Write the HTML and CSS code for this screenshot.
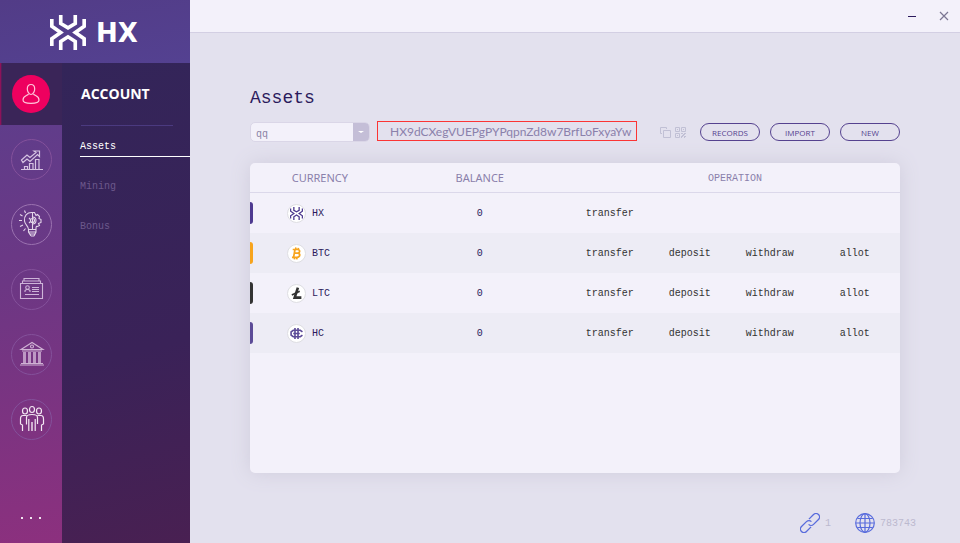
FILE: index.html
```html
<!DOCTYPE html>
<html lang="en">
<head>
<meta charset="utf-8">
<title>HX Wallet</title>
<link rel="stylesheet" href="styles.css">
</head>
<body>
<svg class="defs" aria-hidden="true">
  <symbol id="hx-mark" viewBox="0 0 108 106">
    <g fill="none" stroke="currentColor" stroke-width="11" stroke-linejoin="miter">
      <path d="M32 0V26L54 39L76 26V0"/>
      <path d="M32 106V80L54 66L76 80V106"/>
      <path d="M5 12V34L32 53L5 72V94"/>
      <path d="M103 12V34L76 53L103 72V94"/>
    </g>
  </symbol>
</svg>
<div class="app">
  <aside class="sidebar">
    <div class="brand">
      <svg class="brand-mark"><use href="#hx-mark"/></svg>
      <span class="brand-name">HX</span>
    </div>
    <div class="menus">
      <nav class="rail" aria-label="Sections">
        <button class="rail-item active" type="button" aria-label="Account">
          <span class="disc"><svg width="38" height="38" viewBox="0 0 38 38" fill="none" stroke="#ffc4da" stroke-width="1.200"><path d="M19 9.500C16.500 9.500 15.300 11.500 15.300 14C15.300 16.500 17 19.500 19 19.500S22.700 16.500 22.700 14C22.700 11.500 21.500 9.500 19 9.500ZM16.500 19C15.500 21 11 20.500 11 25C11 27.500 15 28.300 19 28.300S27 27.500 27 25C27 20.500 22.500 21 21.500 19"/></svg></span>
        </button>
        <button class="rail-item" type="button" aria-label="Trading">
          <span class="disc"><svg width="41" height="41" viewBox="0 0 41 41" fill="none" stroke="#d6c3e2" stroke-width="1.200"><path d="M10 30.500H32M13.500 30V27.500H16.500V30M18.500 30V24.500H22V30M24.500 30V20.500H28V30M10.500 21L16 16L19 18.500L25 13.500L23 12H28.500V17.500L26.500 15.500L19 22.500L16 20L12 23.500Z"/></svg></span>
        </button>
        <button class="rail-item bright" type="button" aria-label="Ideas">
          <span class="disc"><svg width="41" height="41" viewBox="0 0 41 41" fill="none" stroke="#e4d6ea" stroke-width="1.100"><path d="M21.500 8.500C16 8 13 12 13.500 17C14 21 17.500 22 17.500 25.500H25C25 23 25 22 26.500 22.500L28.500 21.500L27.500 19.500L30 18.500V15.500L28 14.500L28.500 12.500L26.500 10.500L25 11.500L23.500 8.500ZM21.500 8.500V13M21.500 20V25.500M18 28H25M18.500 30H24.500M20 32H23M17.500 25.500V28L20 32M25 25.500V28L23 32M8 16.500H11M9 22.500L12 21M12.500 27L14.500 24.500M9 10.500L11.500 12M13.500 6.500L14.500 9M18 14L19.500 15.500M18 19L19.500 17.500"/><path d="M21.500 13A3.500 3.500 0 0 1 21.500 20Z"/><circle cx="21.500" cy="16.500" r="2"/></svg></span>
        </button>
        <button class="rail-item" type="button" aria-label="Contacts">
          <span class="disc"><svg width="41" height="41" viewBox="0 0 41 41" fill="none" stroke="#cdb3d8" stroke-width="1.100"><path d="M9.500 14.500H31.500V29.500H9.500ZM11.500 14V12H29.500V14M13 11.500V9.500H28V11.500M14 23V21.500L15.500 20.500H17.500L19 21.500V23M21 18.500H28M21 20.500H28M21 22.500H28M14 25.500H28"/><circle cx="16.500" cy="18.500" r="1.800"/></svg></span>
        </button>
        <button class="rail-item" type="button" aria-label="Bank">
          <span class="disc"><svg width="41" height="41" viewBox="0 0 41 41" fill="none" stroke="#cfb2d4" stroke-width="1.100"><path d="M10 15.500L21 8.500L32 15.500ZM11 17H31M10 29.500H32M9 31H33"/><circle cx="21" cy="12.500" r="1.500"/><path d="M13.500 18V29M18.500 18V29M23.500 18V29M28.500 18V29" stroke-width="3" opacity=".8"/></svg></span>
        </button>
        <button class="rail-item" type="button" aria-label="Community">
          <span class="disc"><svg width="41" height="41" viewBox="0 0 41 41" fill="none" stroke="#f3e7f2" stroke-width="1.200"><ellipse cx="21" cy="10.500" rx="2.500" ry="3"/><ellipse cx="14" cy="12" rx="2.500" ry="3"/><ellipse cx="28" cy="12" rx="2.500" ry="3"/><path d="M16 25H15.500V18.500C15.500 16 17.500 15.500 21 15.500S26.500 16 26.500 18.500V25M15.500 16.500H12C10 16.500 9.500 18 9.500 20V25L11.500 26V32M26.500 16.500H30C32 16.500 32.500 18 32.500 20V25L30.500 26V32M17.800 20V32M24.200 20V32"/><path d="M21 23V32" stroke-width="2" opacity=".7"/></svg></span>
        </button>
        <button class="more" type="button" aria-label="More"><i></i><i></i><i></i></button>
      </nav>
      <nav class="submenu" aria-label="Account">
        <h2>ACCOUNT</h2>
        <a class="current" href="#assets">Assets</a>
        <a href="#mining">Mining</a>
        <a href="#bonus">Bonus</a>
      </nav>
    </div>
  </aside>
  <div class="workspace">
    <header class="titlebar">
      <button type="button" aria-label="Minimize"><svg width="8" height="10" viewBox="0 0 8 10"><path d="M0 5.500H8" stroke="#2b1a5c"/></svg></button>
      <button type="button" aria-label="Close"><svg width="10" height="10" viewBox="0 0 10 10"><path d="M1 1L9 9M9 1L1 9" stroke="#7b7693" stroke-width="1.200"/></svg></button>
    </header>
    <main class="content">
      <h1>Assets</h1>
      <div class="toolbar">
        <div class="picker">
          <select aria-label="Account name"><option>qq</option></select>
          <span class="arrow"></span>
        </div>
        <output class="address">HX9dCXegVUEPgPYPqpnZd8w7BrfLoFxyaYw</output>
        <div class="actions">
          <button class="glyph" type="button" aria-label="Copy address"><svg width="11" height="11" viewBox="0 0 11 11" fill="none" stroke="#c1c0d5"><path d="M3.500 3.500H10.500V10.500H3.500ZM2 6.500H.5V.5H6.500V2"/></svg></button>
          <button class="glyph" type="button" aria-label="Show QR code"><svg width="11" height="11" viewBox="0 0 11 11" fill="none" stroke="#c1c0d5"><path d="M.5.5H4.500V4.500H.5ZM6.500.5H10.500V4.500H6.500ZM.5 6.500H4.500V10.500H.5ZM2 2.500H3M8 2.500H9M2 8.500H3M6 6.500H8M9 6.500H11M8 7.500H10M7 8.500H9M6 9.500H8M9 9.500H11M6 10.500H7M9 10.500H10"/></svg></button>
          <button class="pill" type="button">RECORDS</button>
          <button class="pill" type="button">IMPORT</button>
          <button class="pill" type="button">NEW</button>
        </div>
      </div>
      <section class="card">
        <table>
          <colgroup><col class="c-name"><col class="c-balance"><col class="c-op"><col class="c-op"><col class="c-op"><col class="c-last"></colgroup>
          <thead><tr><th>CURRENCY</th><th>BALANCE</th><th class="mono" colspan="4">OPERATION</th></tr></thead>
          <tbody>
            <tr class="hx"><td><div class="coin"><span class="badge"><svg width="13" height="13"><use href="#hx-mark"/></svg></span><span>HX</span></div></td><td class="amount">0</td><td><a href="#t">transfer</a></td><td></td><td></td><td></td></tr>
            <tr class="btc"><td><div class="coin"><span class="badge"><svg width="13" height="13" viewBox="0 0 12 12" fill="none" stroke="currentColor" stroke-width="1.600"><path d="M2.500 2.300H7C9.500 2.300 9.500 5.700 7 5.700H4M7 5.700C10 5.700 9.500 9.500 6.500 9.500H1.800M4.600 2.300L3.300 9.500M5.500.5L5.200 2M7.800.8L7.500 2.300M4.300 9.500L4 11.500M6.500 9.500L6.200 11.500"/></svg></span><span>BTC</span></div></td><td class="amount">0</td><td><a href="#t">transfer</a></td><td><a href="#d">deposit</a></td><td><a href="#w">withdraw</a></td><td><a href="#a">allot</a></td></tr>
            <tr class="ltc"><td><div class="coin"><span class="badge"><svg width="13" height="13" viewBox="0 0 12 12" fill="none" stroke="currentColor" stroke-width="2.400"><path d="M7.300 .5L4.300 9.800H10.500"/><path d="M1.700 7.300L9 4" stroke-width="1.500"/></svg></span><span>LTC</span></div></td><td class="amount">0</td><td><a href="#t">transfer</a></td><td><a href="#d">deposit</a></td><td><a href="#w">withdraw</a></td><td><a href="#a">allot</a></td></tr>
            <tr class="hc"><td><div class="coin"><span class="badge"><svg width="13" height="13" viewBox="0 0 12 12" fill="none" stroke="currentColor" stroke-width="1.500"><path d="M4.600 1V11M7.400 1V11M3 6H9M7.400 3H3L1 4.500V7.500L3 9H7.400M11.500 4.500L9.500 3H7.400M11.500 7.500L9.500 9H7.400"/></svg></span><span>HC</span></div></td><td class="amount">0</td><td><a href="#t">transfer</a></td><td><a href="#d">deposit</a></td><td><a href="#w">withdraw</a></td><td><a href="#a">allot</a></td></tr>
          </tbody>
        </table>
      </section>
    </main>
    <footer class="status">
      <span class="stat"><svg width="20" height="20" viewBox="0 0 20 20" fill="none" stroke="#586bdc" stroke-width="1.300"><g transform="rotate(-45 10 10)"><path d="M8 13.500H1.500A3.500 3.500 0 0 1 1.500 6.500H8.500A3.500 3.500 0 0 1 12 10"/><path d="M12 6.500H18.500A3.500 3.500 0 0 1 18.500 13.500H11.500A3.500 3.500 0 0 1 8 10"/></g></svg><span>1</span></span>
      <span class="stat"><svg width="20" height="20" viewBox="0 0 20 20" fill="none" stroke="#586bdc" stroke-width="1.200"><circle cx="10" cy="10" r="9.300"/><ellipse cx="10" cy="10" rx="5" ry="9.300"/><path d="M10 .7V19.300M1 10H19M2.500 5.500H17.500M2.500 14.500H17.500"/></svg><span>783743</span></span>
    </footer>
  </div>
</div>
</body>
</html>
```
FILE: styles.css
```css
* { box-sizing: border-box; }

body {
  margin: 0;
  background: #e3e1ee;
  color: #2b1a5c;
  font: 10px/20px "Liberation Mono", monospace;
}

button {
  padding: 0;
  border: 0;
  background: none;
  font: inherit;
  color: inherit;
}

a { color: inherit; text-decoration: none; }
svg { display: block; flex: none; }
.defs { position: absolute; width: 0; height: 0; }

.app { display: flex; min-height: 100vh; }

/* Sidebar */
.sidebar { display: flex; flex-direction: column; flex: none; width: 190px; }

.brand {
  display: flex;
  align-items: center;
  gap: 10px;
  height: 63px;
  padding: 2px 0 0 50px;
  background: linear-gradient(170deg, #523c87, #544191);
  color: #fff;
}
.brand-mark { width: 36px; height: 35px; }
.brand-name { font: bold 26px/30px "DejaVu Sans", sans-serif; }

.menus { display: flex; flex: 1; }

.rail {
  display: flex;
  flex-direction: column;
  gap: 3px;
  width: 62px;
  background: linear-gradient(170deg, #5b3f8d, #6c3784 45%, #8c307e);
}
.rail-item {
  display: flex;
  align-items: center;
  justify-content: center;
  height: 62px;
}
.disc {
  display: flex;
  align-items: center;
  justify-content: center;
  width: 41px;
  height: 41px;
  border: 1px solid #84519b;
  border-radius: 50%;
}
.bright .disc { border-color: #9b72b0; }
.active {
  background: linear-gradient(90deg, #a90c5a, #3a2558 2px);
}
.active .disc { width: 38px; height: 38px; border: 0; background: #ee005f; }
.more {
  display: flex;
  justify-content: center;
  gap: 7px;
  margin-top: auto;
  padding: 10px 0 24px;
}
.more i { width: 2px; height: 2px; background: #f3e7f2; }

.submenu {
  flex: 1;
  padding-left: 18px;
  background: linear-gradient(165deg, #332559, #3a2258 60%, #492052);
}
.submenu h2 {
  margin: 0 17px 10px 1px;
  border-bottom: 1px solid #4b3a80;
  color: #fff;
  font: bold 14px/62px "Open Sans", sans-serif;
}
.submenu a {
  display: block;
  height: 21px;
  margin-bottom: 19px;
  border-bottom: 1px solid transparent;
  color: #6c588b;
  line-height: 22px;
}
.submenu .current { border-color: #fff; color: #fff; }

/* Workspace */
.workspace { display: flex; flex: 1; flex-direction: column; min-width: 0; }

.titlebar {
  display: flex;
  align-items: center;
  justify-content: flex-end;
  gap: 23px;
  height: 33px;
  padding-right: 11px;
  border-bottom: 1px solid #d3cfe3;
  background: #f3f1fa;
}

.content { display: flex; flex: 1; flex-direction: column; padding: 50px 60px 0; }

h1 { margin: 0 0 8px; font-size: 18px; font-weight: normal; line-height: 30px; }

.toolbar { display: flex; align-items: center; height: 22px; margin-bottom: 20px; }

.picker { position: relative; width: 120px; margin-right: 7px; }
.picker select {
  display: block;
  width: 100%;
  height: 20px;
  padding: 2px 20px 0 5px;
  border: 1px solid #dad6e7;
  border-radius: 5px;
  background: #f3f1fa;
  color: #8a82a5;
  font: inherit;
  appearance: none;
}
.arrow {
  position: absolute;
  top: 1px;
  right: 1px;
  bottom: 1px;
  display: flex;
  align-items: center;
  justify-content: center;
  width: 16px;
  border-radius: 0 4px 4px 0;
  background: #c4bed7;
  pointer-events: none;
}
.arrow::after {
  border: 3px solid transparent;
  border-top: 2px solid #fff;
  border-bottom: 0;
  content: "";
}

.address {
  align-self: flex-start;
  width: 260px;
  height: 20px;
  padding-left: 12px;
  border: 1px solid #fb3535;
  color: #8a80ab;
  font: 12px/20px Lato, sans-serif;
}

.actions { display: flex; align-items: center; gap: 10px; margin-left: auto; }
.glyph + .glyph { margin: 0 4px 0 -6px; }
.pill {
  width: 60px;
  height: 18px;
  border: 1px solid #55428f;
  border-radius: 9px;
  color: #55428f;
  font: 8px/18px "Open Sans", sans-serif;
}

.card {
  flex: 1;
  overflow: hidden;
  border-radius: 5px;
  background: #f3f1fa;
  box-shadow: 0 0 20px #cfccdc;
}

table { width: 100%; border-collapse: collapse; table-layout: fixed; }
.c-name { width: 21.5%; }
.c-balance { width: 27.7%; }
.c-op { width: 12.3%; }
.c-last { width: 13.9%; }

th {
  height: 30px;
  padding: 0;
  box-shadow: inset 0 -1px #dbd8ea;
  color: #8a80ab;
  font: 11px/20px "Noto Sans", sans-serif;
}
th.mono { padding-top: 2px; font: 10px/20px "Liberation Mono", monospace; }
td { height: 40px; padding: 2px 0 0; color: #333; text-align: center; }
td:first-child { padding: 0; }
tbody tr:nth-child(even) { background: #edecf5; }
.amount { color: #2b1a5c; }

.coin { display: flex; align-items: center; color: #2b1a5c; line-height: 22px; }
.coin::before {
  width: 3px;
  height: 22px;
  margin-right: 34px;
  border-radius: 0 3px 3px 0;
  background: var(--coin);
  content: "";
}
.badge {
  display: flex;
  align-items: center;
  justify-content: center;
  width: 19px;
  height: 19px;
  margin-right: 6px;
  border: 1px solid #dedee2;
  border-radius: 50%;
  background: #fff;
  color: var(--coin);
}
.badge + span { padding-top: 2px; }
.hx { --coin: #4e3a90; }
.btc { --coin: #f7a41d; }
.ltc { --coin: #333; }
.hc { --coin: #5c4b97; }

.status {
  display: flex;
  justify-content: flex-end;
  gap: 24px;
  margin-top: 30px;
  padding: 0 44px 9px 0;
  color: #bcb9cf;
}
.stat { display: flex; align-items: center; gap: 5px; height: 31px; padding-top: 9px; }
.stat span { padding-top: 2px; }
```
